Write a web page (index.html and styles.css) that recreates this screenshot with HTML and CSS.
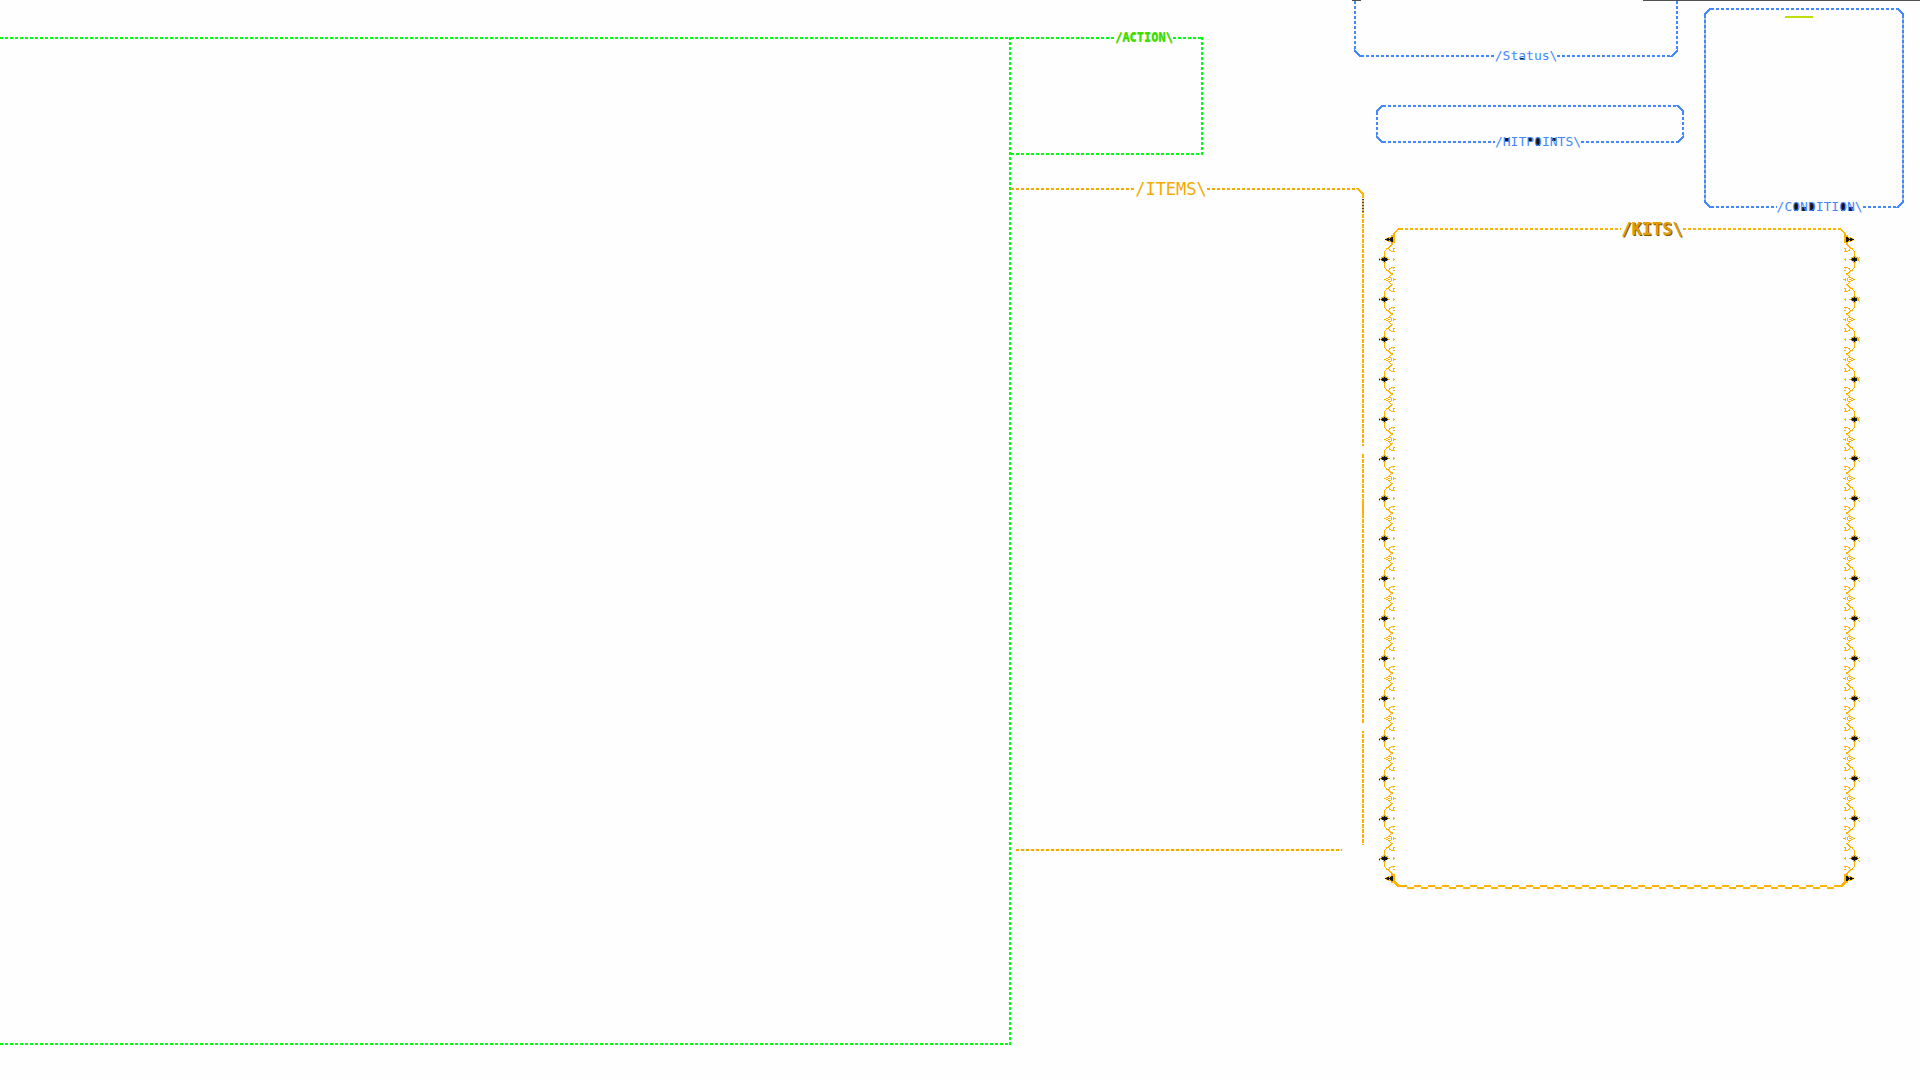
FILE: index.html
```
<!DOCTYPE html>
<html lang="en">
<head>
<meta charset="utf-8">
<title>Character panels</title>
<link rel="stylesheet" href="styles.css">
</head>
<body>
<svg class="defs" aria-hidden="true">
  <defs>
    <g id="bud">
      <path class="gold" d="M5 -4h1v1h1v1h2v2h2v1h-2v1h-2v2h-1v1h-1v-1h-1v-2h-2v-1h-1v-1h1v-2h2v-1h1z"/>
      <path class="ink" d="M2 0h7v1h-7zM3 -1h5v3h-5zM5 -2h1v5h-1z"/>
      <path class="line" d="M5.500 -4v-3l2 -3l3 -2l3 -3M9.500 -11l1 2l3 2M5.500 5v3l2 3l3 2l3 3M9.500 12l1 -2l3 -2M14 -10.500h2M14.500 -10v2M14 -7.500h2M14 8.500h2M14.500 8v2M14 11.500h2M14.500 -1v3M15 .500h1"/>
    </g>
    <g id="leaf">
      <path class="line" d="M5 .500h2M7 -.500h2M9 -1.500h3M7 1.500h2M9 2.500h3M9 .500h2M12.500 -1v3M9.500 -1.500l4 -4M9.500 2.500l4 4M14.500 -1v3M15 .500h2"/>
    </g>
    <g id="cap">
      <path class="gold" d="M7 -1h2v-1h3v-2h2v9h-2v-2h-3v-1h-2z"/>
      <path class="ink" d="M6 0h8v1h-8zM8 -1h2v3h-2zM11 -1h1v3h-1zM12 -2h2v5h-2z"/>
    </g>
    <g id="vine">
      <path class="gold" d="M21 0v2h-2l-3 4v9h-2v-9l5 -6zM14 646h2v7l4 4h1v2h-3l-5 -5z"/>
      <use href="#cap" y="11"/><use href="#cap" y="650"/>
      <use href="#bud" y="31"/><use href="#leaf" y="51"/>
      <use href="#bud" y="71"/><use href="#leaf" y="91"/>
      <use href="#bud" y="111"/><use href="#leaf" y="131"/>
      <use href="#bud" y="151"/><use href="#leaf" y="171"/>
      <use href="#bud" y="191"/><use href="#leaf" y="211"/>
      <use href="#bud" y="230"/><use href="#leaf" y="250"/>
      <use href="#bud" y="270"/><use href="#leaf" y="290"/>
      <use href="#bud" y="310"/><use href="#leaf" y="330"/>
      <use href="#bud" y="350"/><use href="#leaf" y="370"/>
      <use href="#bud" y="390"/><use href="#leaf" y="410"/>
      <use href="#bud" y="430"/><use href="#leaf" y="450"/>
      <use href="#bud" y="470"/><use href="#leaf" y="490"/>
      <use href="#bud" y="510"/><use href="#leaf" y="530"/>
      <use href="#bud" y="550"/><use href="#leaf" y="570"/>
      <use href="#bud" y="590"/><use href="#leaf" y="610"/>
      <use href="#bud" y="630"/>
    </g>
    <pattern id="dots" width="21" height="40" y="30" patternUnits="userSpaceOnUse"><path class="gold" d="M0 0h1v3h-1z"/><path class="ink" d="M0 1h1v1h-1z"/></pattern>
    <pattern id="forks" width="21" height="40" y="29" patternUnits="userSpaceOnUse"><path class="line" d="M0 .500h1M1 1.500h1M2 2.500h1M1 3.500h1M0 4.500h1"/></pattern>
  </defs>
</svg>
<div class="screen">
  <main class="world"></main>
  <div class="side">
    <header class="top">
      <section class="panel action">
        <h2 class="edge">/ACTION\</h2>
      </section>
      <div class="vitals">
        <section class="panel status">
          <h2 class="edge"><span>/St<b class="ink-dot">a</b>tus\</span></h2>
        </section>
        <section class="panel hitpoints">
          <h2 class="edge"><span>/<b class="ink-top">H</b>IT<b class="ink-top">P</b><b class="ink-full">O</b>I<b class="ink-top">N</b>TS\</span></h2>
        </section>
      </div>
      <section class="panel condition">
        <div class="gauge"></div>
        <h2 class="edge"><span>/C<b class="ink-full">O</b><b class="ink-low">N</b><b class="ink-full">D</b>ITI<b class="ink-full">O</b><b class="ink-low">N</b>\</span></h2>
      </section>
    </header>
    <div class="bags">
      <section class="items">
        <h2 class="edge">/ITEMS\</h2>
        <div class="rail"></div>
        <div class="base"></div>
      </section>
      <section class="kits">
        <svg class="vine" viewBox="0 0 21 661" aria-hidden="true"><use href="#vine"/><rect width="1" y="20" height="621" fill="url(#dots)"/></svg>
        <div class="pouch">
          <h2 class="edge">/KITS\</h2>
          <div class="wave"></div>
        </div>
        <svg class="vine flip" viewBox="0 0 21 661" aria-hidden="true"><use href="#vine"/><rect width="3" y="20" height="621" fill="url(#forks)"/></svg>
      </section>
    </div>
  </div>
</div>
</body>
</html>
```
FILE: styles.css
```
:root {
  --paper: #fefefe;
  --green: #00ff0c;
  --blue: #4488ff;
  --gold: #ffb300;
  --ink: #15151c;
}

* { box-sizing: border-box; }

body {
  margin: 0;
  background: var(--paper);
  font-family: "DejaVu Sans Mono", monospace;
}

.defs { position: absolute; width: 0; height: 0; }

.screen {
  display: grid;
  grid-template-columns: minmax(0, 1011fr) minmax(0, 909fr);
  min-height: 100vh;
}

.world {
  --c: var(--green);
  margin: 37px 0 35px;
  background:
    repeating-linear-gradient(90deg, var(--c) 0 3px, transparent 3px 5px) 0 0 / 100% 2px no-repeat,
    repeating-linear-gradient(90deg, var(--c) 0 3px, transparent 3px 5px) 0 100% / 100% 2px no-repeat,
    repeating-linear-gradient(180deg, var(--c) 0 3px, transparent 3px 5px) 100% 0 / 2px 100% no-repeat;
}

/* A title set into a dashed rule */
.edge {
  display: flex;
  align-items: center;
  height: 2px;
  margin: 0;
  color: var(--c);
  font-size: 13px;
  font-weight: 400;
  line-height: 2px;
  white-space: nowrap;
}

.edge::before,
.edge::after {
  content: "";
  flex: var(--before, 1) 1 0;
  height: 2px;
  background: repeating-linear-gradient(90deg, var(--c) 0 3px, transparent 3px 5px);
}

.edge::after { flex-grow: var(--after, 1); }

/* Letters with filled counters */
.edge b { font-weight: 400; background-repeat: no-repeat; background-position: 2px 4px; background-size: 4px 8px; }
.ink-top { background-image: linear-gradient(var(--ink) 0 3px, transparent 3px); }
.ink-full { background-image: linear-gradient(var(--ink), var(--ink)); }
.ink-low { background-image: linear-gradient(transparent 4px, var(--ink) 4px); }
.ink-dot { background-image: linear-gradient(transparent 6px, var(--ink) 6px); }

.top {
  position: relative;
  display: grid;
  grid-template-columns: minmax(0, 192fr) minmax(0, 151fr) minmax(0, 330fr) minmax(0, 20fr) minmax(0, 200fr) minmax(0, 16fr);
  align-items: start;
}

.top::after {
  content: "";
  position: absolute;
  top: 0;
  right: 0;
  width: 277px;
  height: 1px;
  background: #505050;
}

.panel { display: flex; flex-direction: column; }

.action {
  --c: var(--green);
  --before: 104;
  --after: 30;
  height: 118px;
  margin-top: 37px;
  background:
    repeating-linear-gradient(90deg, var(--c) 0 3px, transparent 3px 5px) 0 100% / 100% 2px no-repeat,
    repeating-linear-gradient(180deg, var(--c) 0 3px, transparent 3px 5px) 100% 0 / 2px 100% no-repeat;
}

.action .edge { font-size: 12px; font-weight: 700; color: #44dd00; text-shadow: 0 -1px #44dd00; }

.vitals { grid-column: 3; }

.status, .hitpoints, .condition { --c: var(--blue); }

.status .edge, .hitpoints .edge, .condition .edge { margin: auto 7px 0; }

.status {
  position: relative;
  height: 57px;
  margin-right: 6px;
  --before: 133;
  --after: 113;
  background:
    linear-gradient(45deg, transparent 4px, var(--c) 4px 6px, transparent 6px) 0 100% / 8px 8px no-repeat,
    linear-gradient(315deg, transparent 4px, var(--c) 4px 6px, transparent 6px) 100% 100% / 8px 8px no-repeat,
    repeating-linear-gradient(180deg, transparent 0 1px, var(--c) 1px 4px, transparent 4px 5px) 0 0 / 2px calc(100% - 7px) no-repeat,
    repeating-linear-gradient(180deg, transparent 0 1px, var(--c) 1px 4px, transparent 4px 5px) 100% 0 / 2px calc(100% - 7px) no-repeat;
}

.status::before {
  content: "";
  position: absolute;
  top: 0;
  left: -2px;
  width: 9px;
  height: 1px;
  background: #505050;
}

.hitpoints, .condition {
  background:
    linear-gradient(135deg, transparent 4px, var(--c) 4px 6px, transparent 6px) 0 0 / 8px 8px no-repeat,
    linear-gradient(225deg, transparent 4px, var(--c) 4px 6px, transparent 6px) 100% 0 / 8px 8px no-repeat,
    linear-gradient(45deg, transparent 4px, var(--c) 4px 6px, transparent 6px) 0 100% / 8px 8px no-repeat,
    linear-gradient(315deg, transparent 4px, var(--c) 4px 6px, transparent 6px) 100% 100% / 8px 8px no-repeat,
    repeating-linear-gradient(90deg, var(--c) 0 3px, transparent 3px 5px) 7px 0 / calc(100% - 14px) 2px no-repeat,
    repeating-linear-gradient(180deg, var(--c) 0 3px, var(--gap) 3px 5px) 0 7px / 2px calc(100% - 14px) no-repeat,
    repeating-linear-gradient(180deg, var(--c) 0 3px, var(--gap) 3px 5px) 100% 7px / 2px calc(100% - 14px) no-repeat;
}

.hitpoints {
  --gap: transparent;
  --before: 112;
  --after: 96;
  height: 38px;
  margin: 48px 0 0 22px;
}

.condition {
  --gap: #a8bcdf;
  --before: 65;
  --after: 34;
  grid-column: 5;
  height: 200px;
  margin-top: 8px;
}

.gauge {
  width: 28px;
  height: 2px;
  margin: 8px 0 0 81px;
  background: #c0dd0c;
}

.bags {
  display: grid;
  grid-template-columns: minmax(0, 353fr) minmax(0, 15fr) minmax(0, 481fr) minmax(0, 60fr);
  align-items: start;
  margin-top: -20px;
}

.items, .kits { --c: var(--gold); }
.items .edge, .kits .edge { font-size: 17px; }

.items {
  --before: 124;
  --after: 151;
  display: flex;
  flex-direction: column;
  height: 663px;
  background: linear-gradient(225deg, transparent 4px, var(--c) 4px 6px, transparent 6px) 100% 0 / 8px 8px no-repeat;
}

.items .edge { margin-right: 6px; --c: #f4aa00; }

.rail {
  flex: 1;
  margin: 4px 0 4px;
  background:
    linear-gradient(var(--paper), var(--paper)) 100% 252px / 2px 8px no-repeat,
    linear-gradient(var(--paper), var(--paper)) 100% 529px / 2px 8px no-repeat,
    linear-gradient(var(--c), var(--c)) 100% 309px / 2px 15px no-repeat,
    repeating-linear-gradient(180deg, #5c4210 0 1px, #d8b676 1px 3px) 100% 5px / 2px 13px no-repeat,
    repeating-linear-gradient(180deg, var(--c) 0 4px, transparent 4px 5px) 100% 0 / 2px 100% no-repeat;
}

.base {
  height: 2px;
  margin: 0 22px 0 5px;
  background: repeating-linear-gradient(90deg, #f4aa00 0 3px, #fff0c8 3px 5px);
}

.kits {
  --before: 221;
  --after: 156;
  grid-column: 3;
  display: flex;
  margin-top: 40px;
}

.vine { flex: none; width: 21px; height: 661px; shape-rendering: crispEdges; }
.flip { transform: scaleX(-1); }
.gold { fill: var(--gold); }
.ink { fill: var(--ink); }
.line { fill: none; stroke: var(--gold); stroke-width: 1px; }

.pouch {
  flex: 1;
  display: flex;
  flex-direction: column;
  justify-content: space-between;
}

.kits .edge { color: #e09c00; font-weight: 700; text-shadow: 1px 1px #7a5600; }

.wave {
  height: 4px;
  background:
    repeating-linear-gradient(90deg, var(--c) 0 7px, transparent 7px 14px) 0 0 / 100% 2px no-repeat,
    repeating-linear-gradient(90deg, transparent 0 7px, var(--c) 7px 14px) 0 100% / 100% 2px no-repeat;
}
```
